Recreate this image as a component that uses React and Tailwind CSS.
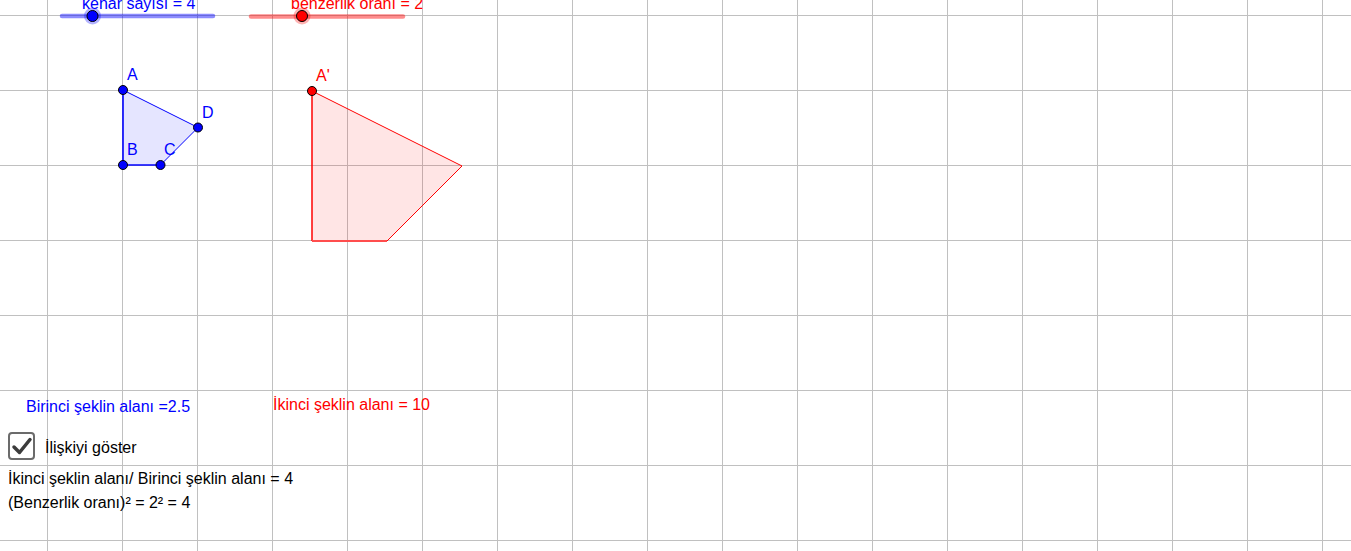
import React from 'react';

const font = { fontFamily: '"Liberation Sans", Arial, sans-serif' };

const xs = Array.from({ length: 18 }, (_, i) => 47.5 + i * 75);
const ys = Array.from({ length: 8 }, (_, i) => 15.5 + i * 75);

const Point = ({ x, y, fill }) => (
  <circle cx={x} cy={y} r="4.5" fill={fill} stroke="#000" strokeWidth="1" />
);

const SliderPoint = ({ x, fill, halo }) => (
  <g>
    <circle cx={x} cy="16" r="8.5" fill={halo} />
    <circle cx={x} cy="16" r="5.5" fill={fill} stroke="#000" strokeWidth="1" />
  </g>
);

// labels sit on the geometry canvas at their coordinates
const Label = ({ x, y, className, children }) => (
  <div
    className={`absolute whitespace-nowrap text-[16px] leading-none ${className}`}
    style={{ left: x, top: y }}
  >
    {children}
  </div>
);

export default function App() {
  return (
    <div className="relative w-[1351px] h-[551px] overflow-hidden bg-white" style={font}>
      <svg className="absolute inset-0" width="1351" height="551">
        {xs.map((x) => (
          <line key={'v' + x} x1={x} y1="0" x2={x} y2="551" stroke="#c0c0c0" strokeWidth="1" />
        ))}
        {ys.map((y) => (
          <line key={'h' + y} x1="0" y1={y} x2="1351" y2={y} stroke="#c0c0c0" strokeWidth="1" />
        ))}

        {/* sliders */}
        <line x1="62" y1="16" x2="213" y2="16" stroke="#0000ff" strokeOpacity="0.45" strokeWidth="4.5" strokeLinecap="round" />
        <SliderPoint x={92.5} fill="#0000ff" halo="rgba(0,0,255,0.3)" />
        <line x1="251" y1="16.5" x2="403" y2="16.5" stroke="#ff0000" strokeOpacity="0.45" strokeWidth="4.5" strokeLinecap="round" />
        <SliderPoint x={302} fill="#ff0000" halo="rgba(255,0,0,0.3)" />

        {/* first shape */}
        <polygon points="123,90 123,165 160.5,165 198,127.5" fill="#0000ff" fillOpacity="0.1" stroke="none" />
        <line x1="123" y1="90" x2="123" y2="165" stroke="#0000ff" strokeWidth="1.6" />
        <line x1="123" y1="165" x2="160.5" y2="165" stroke="#0000ff" strokeWidth="1.6" />
        <line x1="160.5" y1="165" x2="198" y2="127.5" stroke="#0000ff" strokeWidth="1" />
        <line x1="198" y1="127.5" x2="123" y2="90" stroke="#0000ff" strokeWidth="1" />
        <Point x={123} y={90} fill="#0000ff" />
        <Point x={123} y={165} fill="#0000ff" />
        <Point x={160.5} y={165} fill="#0000ff" />
        <Point x={198} y={127.5} fill="#0000ff" />

        {/* second shape */}
        <polygon points="312,91 312,241 387,241 462,166" fill="#ff0000" fillOpacity="0.1" stroke="none" />
        <line x1="312" y1="91" x2="312" y2="241" stroke="#ff0000" strokeWidth="1.5" />
        <line x1="312" y1="241" x2="387" y2="241" stroke="#ff4d4d" strokeWidth="2" />
        <line x1="387" y1="241" x2="462" y2="166" stroke="#ff0000" strokeWidth="1" />
        <line x1="462" y1="166" x2="312" y2="91" stroke="#ff0000" strokeWidth="1" />
        <Point x={312} y={91} fill="#ff0000" />
      </svg>

      <Label x={82} y={-4} className="text-[#0000ff]">kenar sayısı = 4</Label>
      <Label x={291} y={-4} className="text-[#ff0000]">benzerlik oranı = 2</Label>

      <Label x={127} y={67} className="text-[#0000ff]">A</Label>
      <Label x={202} y={105} className="text-[#0000ff]">D</Label>
      <Label x={127} y={142} className="text-[#0000ff]">B</Label>
      <Label x={164} y={142} className="text-[#0000ff]">C</Label>
      <Label x={316} y={68} className="text-[#ff0000]">A'</Label>

      <Label x={26} y={399} className="text-[#0000ff]">Birinci şeklin alanı =2.5</Label>
      <Label x={273} y={397} className="text-[#ff0000]">İkinci şeklin alanı = 10</Label>

      <div className="absolute left-[8px] top-[432px] flex flex-col text-[16px] leading-none text-black">
        <label className="flex items-center gap-[10px]">
          <div className="w-[27px] h-[28px] rounded-[4px] border-2 border-[#6b6b6b] bg-white flex items-center justify-center">
            <svg width="22" height="20" viewBox="0 0 22 20">
              <path d="M3 11 L8.5 16.5 L19 3.5" fill="none" stroke="#3c3c3c" strokeWidth="3.5" strokeLinecap="round" strokeLinejoin="round" />
            </svg>
          </div>
          <span className="pt-[3px]">İlişkiyi göster</span>
        </label>
        <div className="mt-[11px] flex flex-col gap-[8px]">
          <span>İkinci şeklin alanı/ Birinci şeklin alanı = 4</span>
          <span>(Benzerlik oranı)² = 2² = 4</span>
        </div>
      </div>
    </div>
  );
}
